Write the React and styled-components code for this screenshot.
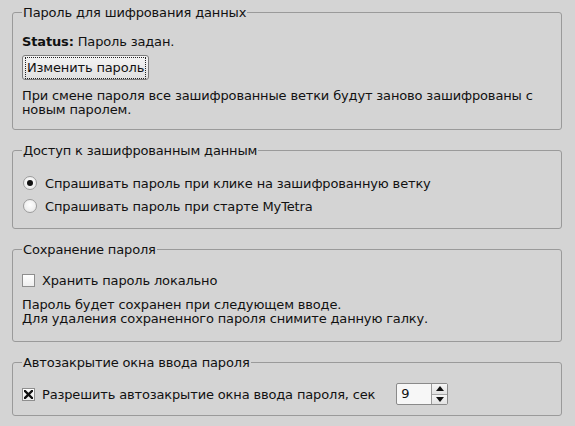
import React from "react";
import styled, { createGlobalStyle } from "styled-components";

const Global = createGlobalStyle`
  html, body { margin: 0; padding: 0; background: #d4d4d4; }
  body {
    font-family: "DejaVu Sans", "Liberation Sans", sans-serif;
    font-size: 13px;
    letter-spacing: -0.15px;
    color: #111;
  }
`;

const Page = styled.div`
  display: flex;
  flex-direction: column;
  gap: 13px;
  padding: 5px 0 0 12px;
  width: 550px;
`;

const Group = styled.fieldset`
  margin: 0;
  border: 1px solid #9a9a9a;
  border-radius: 3px;
  padding: ${(p) => p.$pad || "14px 9px 11px 9px"};
  min-width: 0;
  display: flex;
  flex-direction: column;
  gap: ${(p) => p.$gap || "6px"};
`;

const Legend = styled.legend`
  padding: 0 1px;
  margin-left: 0;
  line-height: 15px;
`;

const Line = styled.div`
  line-height: 15px;
  height: 15px;
`;

const Para = styled.div`
  line-height: 14px;
  margin-top: ${(p) => p.$mt || "0"};
`;

const Bold = styled.b`
  font-weight: bold;
`;

const Button = styled.button`
  align-self: flex-start;
  font: inherit;
  letter-spacing: inherit;
  color: #111;
  height: 25px;
  padding: 0 2px;
  border: 1px solid #7c7c7c;
  border-radius: 3px;
  background: linear-gradient(#f4f4f4, #e0e0e0);
  display: flex;
  align-items: center;
  cursor: pointer;
`;

const Focus = styled.span`
  border: 1px dotted #222;
  padding: 2px 1px 3px 1px;
  line-height: 15px;
`;

const Option = styled.label`
  display: flex;
  align-items: center;
  gap: ${(p) => p.$gap || "7px"};
  line-height: 15px;
  height: 16px;
`;

const Radio = styled.span`
  width: 12px;
  height: 12px;
  margin-left: 1px;
  border-radius: 50%;
  border: 1px solid #9c9c9c;
  background: radial-gradient(circle at 50% 40%, #ffffff, #e4e4e4);
  display: flex;
  align-items: center;
  justify-content: center;
  flex: none;
  &::after {
    content: "";
    width: 6px;
    height: 6px;
    border-radius: 50%;
    background: ${(p) => (p.$checked ? "#111" : "transparent")};
  }
`;

const Check = styled.span`
  width: 11px;
  height: 11px;
  border: 1px solid #8e8e8e;
  background: linear-gradient(#ffffff, #eeeeee);
  display: flex;
  align-items: center;
  justify-content: center;
  flex: none;
`;

const Row = styled.div`
  display: flex;
  align-items: center;
  height: 22px;
`;

const Spin = styled.div`
  margin-left: 21px;
  width: 52px;
  height: 22px;
  box-sizing: border-box;
  border: 1px solid #8a8a8a;
  border-radius: 2px;
  background: #f7f7f7;
  display: flex;
`;

const SpinValue = styled.div`
  flex: 1;
  padding-left: 4px;
  line-height: 20px;
`;

const SpinButtons = styled.div`
  width: 15px;
  border-left: 1px solid #9a9a9a;
  display: flex;
  flex-direction: column;
`;

const SpinBtn = styled.div`
  flex: 1;
  background: linear-gradient(#f6f6f6, #e2e2e2);
  display: flex;
  align-items: center;
  justify-content: center;
  & + & { border-top: 1px solid #a6a6a6; }
`;

const Tri = ({ up }) => (
  <svg width="8" height="5" viewBox="0 0 8 5">
    <path d={up ? "M0 5 L4 0 L8 5 Z" : "M0 0 L4 5 L8 0 Z"} fill="#111" />
  </svg>
);

const Cross = () => (
  <svg width="9" height="9" viewBox="0 0 9 9">
    <path d="M1 1 L8 8 M8 1 L1 8" stroke="#111" strokeWidth="2.4" strokeLinecap="square" />
  </svg>
);

export default function App() {
  return (
    <>
      <Global />
      <Page>
        <Group $pad="14px 9px 12px 9px">
          <Legend>Пароль для шифрования данных</Legend>
          <Line>
            <Bold>Status:</Bold> Пароль задан.
          </Line>
          <Button>
            <Focus>Изменить пароль</Focus>
          </Button>
          <Para $mt="3px">
            При смене пароля все зашифрованные ветки будут заново зашифрованы с
            <br />
            новым паролем.
          </Para>
        </Group>

        <Group $pad="17px 9px 14px 9px" $gap="7px">
          <Legend>Доступ к зашифрованным данным</Legend>
          <Option $gap="8px">
            <Radio $checked />
            Спрашивать пароль при клике на зашифрованную ветку
          </Option>
          <Option $gap="8px">
            <Radio />
            Спрашивать пароль при старте MyTetra
          </Option>
        </Group>

        <Group $pad="15px 9px 15px 9px" $gap="10px">
          <Legend>Сохранение пароля</Legend>
          <Option>
            <Check />
            Хранить пароль локально
          </Option>
          <Para>
            Пароль будет сохранен при следующем вводе.
            <br />
            Для удаления сохраненного пароля снимите данную галку.
          </Para>
        </Group>

        <Group $pad="13px 9px 10px 9px">
          <Legend>Автозакрытие окна ввода пароля</Legend>
          <Row>
            <Option>
              <Check>
                <Cross />
              </Check>
              Разрешить автозакрытие окна ввода пароля, сек
            </Option>
            <Spin>
              <SpinValue>9</SpinValue>
              <SpinButtons>
                <SpinBtn>
                  <Tri up />
                </SpinBtn>
                <SpinBtn>
                  <Tri />
                </SpinBtn>
              </SpinButtons>
            </Spin>
          </Row>
        </Group>
      </Page>
    </>
  );
}
